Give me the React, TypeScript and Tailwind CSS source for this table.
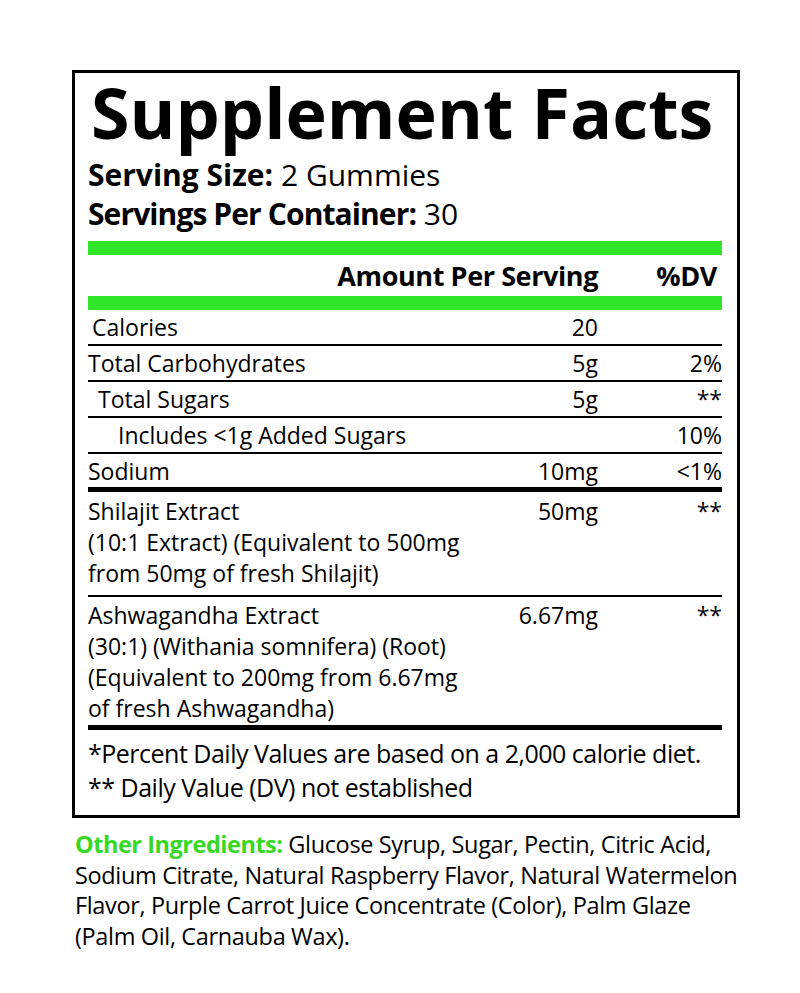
import React from 'react';

interface NutrientRow {
    name: string;
    amount: string;
    dv: string;
    indent: string;
}

const rows: NutrientRow[] = [
    { name: 'Calories', amount: '20', dv: '', indent: 'pl-[4px]' },
    { name: 'Total Carbohydrates', amount: '5g', dv: '2%', indent: 'pl-0' },
    { name: 'Total Sugars', amount: '5g', dv: '**', indent: 'pl-[10px]' },
    { name: 'Includes <1g Added Sugars', amount: '', dv: '10%', indent: 'pl-[30px]' },
];

const App = (): React.ReactElement => {
    return (
        <div className="w-[800px] h-[993px] bg-white text-black font-['Open_Sans',sans-serif] font-medium overflow-hidden">
            {/* Facts box */}
            <div className="ml-[72px] mt-[70px] w-[668px] border-[3px] border-black pl-[13px] pr-[15px] pt-[4px] pb-[11px]">
                <h1 className="text-[70px] leading-[70px] font-bold pl-[3px] whitespace-nowrap">Supplement Facts</h1>
                <div className="mt-[8px] text-[30px] leading-[39px] whitespace-nowrap">
                    <p><span className="font-bold">Serving Size:</span> 2 Gummies</p>
                    <p><span className="font-bold tracking-[-0.03em]">Servings Per Container:</span> 30</p>
                </div>

                <div className="mt-[8px] h-[14px] bg-[#30e52a]" />
                <div className="flex h-[41px] text-[27px] leading-[41px] font-bold tracking-[-0.015em]">
                    <div className="flex-1" />
                    <div className="text-right">Amount Per Serving</div>
                    <div className="w-[124px] pr-[5px] text-right">%DV</div>
                </div>
                <div className="h-[14px] bg-[#30e52a]" />

                {rows.map((row) => (
                    <div key={row.name} className="flex h-[36px] border-b-2 border-black text-[23px] leading-[34px] whitespace-nowrap">
                        <div className={`flex-1 ${row.indent}`}>{row.name}</div>
                        <div className="text-right">{row.amount}</div>
                        <div className="w-[124px] text-right">{row.dv}</div>
                    </div>
                ))}
                <div className="flex h-[33px] text-[23px] leading-[34px]">
                    <div className="flex-1">Sodium</div>
                    <div className="text-right">10mg</div>
                    <div className="w-[124px] text-right">&lt;1%</div>
                </div>
                <div className="h-[5px] bg-black" />

                <div className="flex pt-[4px] pb-[6px] border-b-2 border-black text-[23px] leading-[31px] whitespace-nowrap">
                    <div className="flex-1">
                        Shilajit Extract<br />
                        (10:1 Extract) (Equivalent to 500mg<br />
                        from 50mg of fresh Shilajit)
                    </div>
                    <div className="text-right">50mg</div>
                    <div className="w-[124px] text-right">**</div>
                </div>
                <div className="flex pt-[3px] pb-[1px] text-[23px] leading-[31px] whitespace-nowrap">
                    <div className="flex-1">
                        Ashwagandha Extract<br />
                        (30:1) (Withania somnifera) (Root)<br />
                        (Equivalent to 200mg from 6.67mg<br />
                        of fresh Ashwagandha)
                    </div>
                    <div className="text-right">6.67mg</div>
                    <div className="w-[124px] text-right">**</div>
                </div>
                <div className="h-[5px] bg-black" />

                <div className="pt-[6px] text-[25px] leading-[34px] tracking-[-0.02em] whitespace-nowrap">
                    <p>*Percent Daily Values are based on a 2,000 calorie diet.</p>
                    <p>** Daily Value (DV) not established</p>
                </div>
            </div>

            {/* Other ingredients */}
            <p className="mt-[11px] ml-[75px] text-[23.5px] leading-[30.5px] tracking-[-0.015em] whitespace-nowrap">
                <span className="font-bold text-[#36d823] tracking-[-0.02em]">Other Ingredients:</span> Glucose Syrup, Sugar, Pectin, Citric Acid,<br />
                Sodium Citrate, Natural Raspberry Flavor, Natural Watermelon<br />
                Flavor, Purple Carrot Juice Concentrate (Color), Palm Glaze<br />
                (Palm Oil, Carnauba Wax).
            </p>
        </div>
    );
};

export default App;
